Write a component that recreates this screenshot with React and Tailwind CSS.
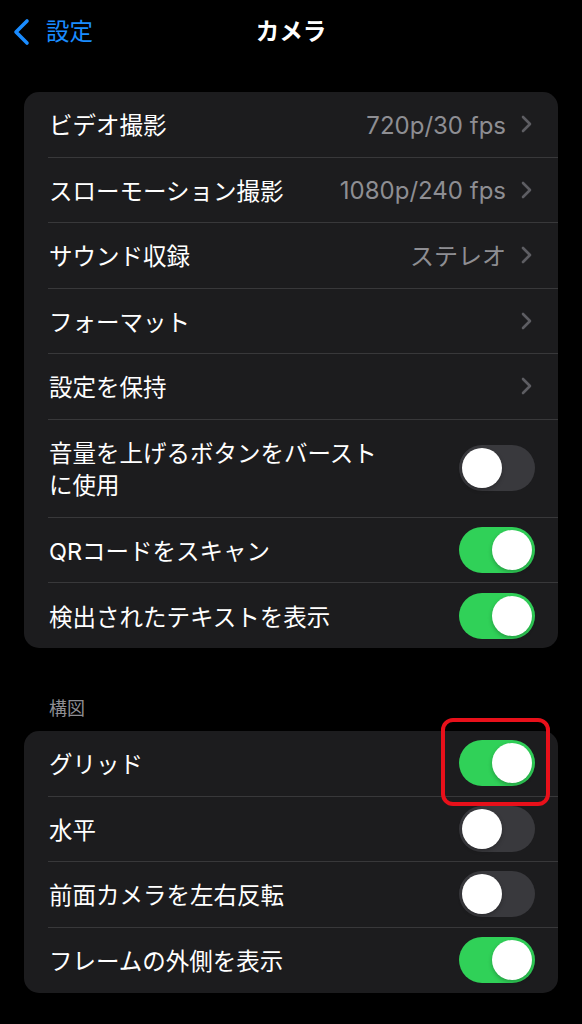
import React from "react";

const FONT = { fontFamily: 'Inter, "Noto Sans CJK JP", sans-serif' };

function Toggle({ on }) {
  return (
    <div
      className={`relative w-[76px] h-[46px] rounded-full shrink-0 ${on ? "bg-[#30d158]" : "bg-[#39393d]"}`}
    >
      <div
        className={`absolute top-[3px] w-[40px] h-[40px] rounded-full bg-white shadow-[0_2px_4px_rgba(0,0,0,0.25)] ${on ? "right-[3px]" : "left-[3px]"}`}
      />
    </div>
  );
}

function Chevron() {
  return (
    <svg width="11" height="18" viewBox="0 0 11 18" className="shrink-0">
      <polyline
        points="2,2 9,9 2,16"
        fill="none"
        stroke="#5d5d62"
        strokeWidth="2.6"
        strokeLinecap="round"
        strokeLinejoin="round"
      />
    </svg>
  );
}

function Row({ label, value, toggle, disclosure, last, tall }) {
  return (
    <div className="relative">
      <div
        className={`flex items-center justify-between pl-[25px] pr-[23px] ${tall ? "h-[97px]" : last ? "h-[65px]" : "h-[64.5px]"}`}
      >
        <div className="text-[23.5px] leading-[32px] text-white pr-4 pt-[4px]">
          {label}
        </div>
        {disclosure && (
          <div className="flex items-center gap-[15px] pr-[3px]">
            {value && (
              <span className="text-[24px] leading-[32px] text-[#8e8e93] pt-[3px]">
                {value}
              </span>
            )}
            <Chevron />
          </div>
        )}
        {toggle !== undefined && <Toggle on={toggle} />}
      </div>
      {!last && <div className="ml-[24px] h-px bg-[#38383a]" />}
    </div>
  );
}

export default function App() {
  return (
    <div className="min-h-[1024px] w-full bg-black" style={FONT}>
      {/* Header */}
      <div className="relative h-[64px] flex items-center justify-center">
        <div className="absolute left-[12px] top-0 h-full flex items-center gap-[14px]">
          <svg width="20" height="28" viewBox="0 0 20 28">
            <polyline
              points="15,3 4,14 15,25"
              fill="none"
              stroke="#1a8cff"
              strokeWidth="3.6"
              strokeLinecap="round"
              strokeLinejoin="round"
            />
          </svg>
          <span className="text-[23.5px] leading-[32px] text-[#1a8cff]">設定</span>
        </div>
        <span className="text-[23.5px] leading-[32px] text-white font-semibold">カメラ</span>
      </div>

      {/* Card 1 */}
      <div className="mt-[28px] mx-[24px] rounded-[15px] bg-[#1c1c1e] overflow-hidden">
        <Row label="ビデオ撮影" value="720p/30 fps" disclosure />
        <Row label="スローモーション撮影" value="1080p/240 fps" disclosure />
        <Row label="サウンド収録" value="ステレオ" disclosure />
        <Row label="フォーマット" disclosure />
        <Row label="設定を保持" disclosure />
        <Row
          tall
          label={
            <>
              音量を上げるボタンをバースト
              <br />
              に使用
            </>
          }
          toggle={false}
        />
        <Row label="QRコードをスキャン" toggle={true} />
        <Row label="検出されたテキストを表示" toggle={true} last />
      </div>

      {/* Section header */}
      <div className="mt-[49px] pl-[49px] text-[18px] leading-[24px] text-[#8e8e93]">構図</div>

      {/* Card 2 */}
      <div className="relative mt-[10px] mx-[24px] rounded-[15px] bg-[#1c1c1e]">
        <Row label="グリッド" toggle={true} />
        <Row label="水平" toggle={false} />
        <Row label="前面カメラを左右反転" toggle={false} />
        <Row label="フレームの外側を表示" toggle={true} last />
        {/* Red annotation box */}
        <div className="absolute left-[417px] top-[-13px] w-[109px] h-[88px] rounded-[12px] border-[4px] border-[#e8101a]" />
      </div>
    </div>
  );
}
